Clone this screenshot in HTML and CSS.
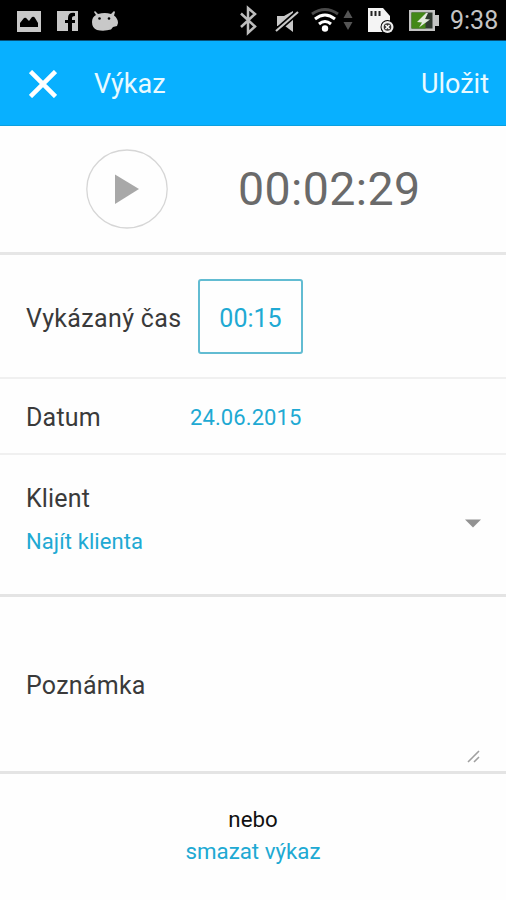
FILE: index.html
```html
<!DOCTYPE html>
<html lang="cs">
<head>
<meta charset="utf-8">
<title>Výkaz</title>
<link rel="stylesheet" href="styles.css">
</head>
<body>
<div class="status">
  <svg class="status-icons" width="506" height="40" viewBox="0 0 506 40">
    <g fill="#c8c8c8">
      <path d="M17 11h24v21H17z"/>
      <path d="M57 11h21v20h-6v-8h3v-3h-3v-2q0-2 3-2v-3q-7-1-7 5v2h-3v3h3v8H57z"/>
      <path d="M97 30q-5-2-5-8 0-5 4-7l-2-3 1-1 3 3q7-2 13 0l3-3 1 1-1 3.500q4 3 4 7.500l-1 3-4 1-2 2.500q-7 2-14 .5z"/>
    </g>
    <g fill="#000"><circle cx="99.500" cy="18.500" r="1.300"/><circle cx="109" cy="18.500" r="1.300"/></g>
    <path d="M20 27V23l4-5q2-1 3 1l2 2 3-4q2-1 3 1l3 5v4z" fill="#000"/>
    <path d="M241 13.500l14 13-7 6.500V8l7 6-14 13" fill="none" stroke="#bdbdbd" stroke-width="2.500"/>
    <path d="M277 16h7l9-5v21l-8-6h-8z" fill="#c8c8c8"/>
    <path d="M275 32L299 11" stroke="#000" stroke-width="5.500"/>
    <path d="M276 31L298 12" stroke="#c8c8c8" stroke-width="2.200"/>
    <g fill="none" stroke="#fff" stroke-width="3">
      <path d="M312 14q13-9 26 0" stroke="#4a4a4a"/>
      <path d="M315 19q10-8 20 0M319 24q6-5 12 0"/>
    </g>
    <circle cx="325" cy="28.500" r="3.200" fill="#fff"/>
    <path d="M343.500 18l4.500-8 4.500 8zM343.500 22h9l-4.500 8z" fill="#555"/>
    <path d="M368 8h15l7 8v16h-22z" fill="#f4f4f4"/>
    <path d="M371.500 11v5M375.500 11v5M379.500 11v5" stroke="#222" stroke-width="2"/>
    <circle cx="387.500" cy="27" r="7" fill="#000"/>
    <circle cx="387.500" cy="27" r="6" fill="#eee"/>
    <circle cx="387.500" cy="27" r="3.800" fill="#333"/>
    <path d="M385.500 25l4 4M389.500 25l-4 4" stroke="#fff" stroke-width="1.500"/>
    <path d="M409 10h26v5h4v11h-4v5h-26z" fill="#c4c4c4"/>
    <path d="M411.500 12.500h21v16h-21z" fill="#303a30"/>
    <path d="M411.500 12.500h14v16h-14z" fill="#438817"/>
    <path d="M426 13l-9 9 5 .5-3 5 11-8-5-.5 3-6z" fill="#e2eadc"/>
  </svg>
  <span class="clock">9:38</span>
</div>
<header class="bar">
  <svg class="close" width="28" height="28" viewBox="0 0 28 28"><path d="M1.500 1.500l25 25M26.500 1.500l-25 25" stroke="#fff" stroke-width="4.500"/></svg>
  <span class="title">Výkaz</span>
  <span class="save">Uložit</span>
</header>
<main>
  <section class="timer">
    <svg class="play" width="82" height="80" viewBox="0 0 82 80"><ellipse cx="41" cy="40" rx="40.200" ry="39" fill="none" stroke="#d6d6d6" stroke-width="1.300"/><path d="M29 25.500L53 40 29 55z" fill="#a8a8a8"/></svg>
    <span class="elapsed">00:02:29</span>
  </section>
  <section class="row reported">
    <span class="label label-time">Vykázaný čas</span>
    <span class="time-box"><span class="time">00:15</span></span>
  </section>
  <section class="row date-row">
    <span class="label label-date">Datum</span>
    <span class="date">24.06.2015</span>
  </section>
  <section class="client">
    <div>
      <div class="label"><span class="label-client">Klient</span></div>
      <div class="find"><span class="find-text">Najít klienta</span></div>
    </div>
    <svg class="caret" width="16" height="9" viewBox="0 0 16 9"><path d="M0 .5h16L8 8.500z" fill="#929292"/></svg>
  </section>
  <section class="note">
    <span class="label label-note">Poznámka</span>
    <svg class="grip" width="14" height="13" viewBox="0 0 14 13"><path d="M1 12L12 1M7 12l5-5" stroke="#a0a0a0" stroke-width="1.600"/></svg>
  </section>
  <footer>
    <div><span class="or">nebo</span></div>
    <div><span class="delete">smazat výkaz</span></div>
  </footer>
</main>
</body>
</html>
```
FILE: styles.css
```css
* { box-sizing: border-box; }
body { margin: 0; width: 506px; height: 900px; overflow: hidden; background: #fefefe; font-family: Roboto, "Liberation Sans", sans-serif; font-size: 25px; line-height: 32px; color: #3a3a3a; }
span { white-space: nowrap; }
svg { display: block; flex: none; }
.status { position: relative; height: 41px; background: #000; border-bottom: 1px solid #075078; }
.clock { position: absolute; left: 450px; top: 5px; font-size: 25px; color: #c4c4c4; }
.bar { height: 85px; display: flex; align-items: center; padding: 1px 17px 0 29px; background: #08b0ff; color: #e9faff; font-size: 27px; border-bottom: 1px solid #0ba0df; }
.title { margin-left: 37px; }
.save { margin-left: auto; }
.timer { height: 129px; display: flex; align-items: center; padding: 0 0 1px 86px; border-bottom: 3px solid #e6e6e6; }
.elapsed { margin-left: 70px; font-size: 46.5px; letter-spacing: 0.4px; color: #6a6a6a; }
.row { display: flex; align-items: center; padding-left: 26px; }
.reported { height: 124px; border-bottom: 2px solid #f0f0f0; }
.label-time { width: 172px; padding-top: 5px; letter-spacing: 0.35px; }
.time-box { width: 105px; height: 75px; display: flex; align-items: center; justify-content: center; border: 2px solid #62bcd2; border-radius: 3px; padding-top: 6px; }
.time, .date, .find, .delete { color: #20a9d3; }
.date-row { height: 76px; padding-top: 3px; border-bottom: 2px solid #f0f0f0; }
.label-date { width: 164px; letter-spacing: 0.2px; }
.date { font-size: 22px; letter-spacing: 0.1px; padding-top: 1px; }
.client { height: 142px; display: flex; justify-content: space-between; padding: 28px 25px 0 26px; border-bottom: 3px solid #e4e4e4; }
.label-client { letter-spacing: 0.15px; }
.find { margin-top: 11px; font-size: 22px; letter-spacing: 0.1px; }
.caret { margin-top: 36px; }
.note { height: 177px; display: flex; justify-content: space-between; padding: 73px 25px 0 26px; border-bottom: 3px solid #e4e4e4; }
.label-note { letter-spacing: 0.25px; }
.grip { align-self: flex-end; margin-bottom: 8px; }
footer { padding-top: 29px; text-align: center; font-size: 22.3px; }
.or { color: #111; }
```
